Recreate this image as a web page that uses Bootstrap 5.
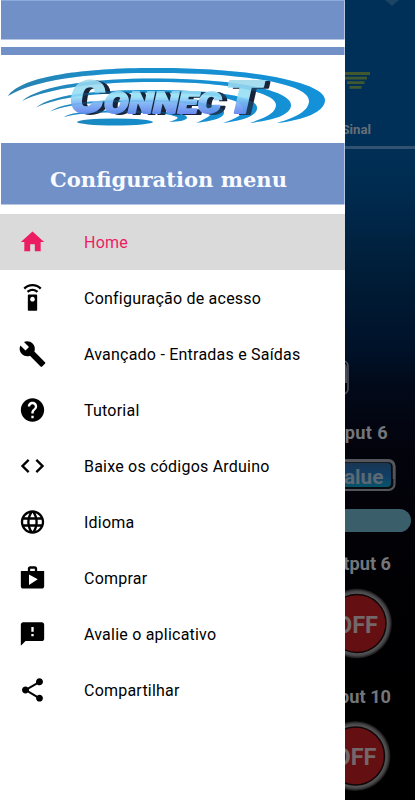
<!DOCTYPE html>
<html lang="pt">
<head>
<meta charset="utf-8">
<meta name="viewport" content="width=device-width, initial-scale=1">
<title>Connect</title>
<link href="https://cdn.jsdelivr.net/npm/bootstrap@5.3.0/dist/css/bootstrap.min.css" rel="stylesheet">
<style>
body{font-family:Roboto,"Liberation Sans",sans-serif;background:#000}
.screen{width:415px;height:800px}
.drawer{width:345px;background:#fff}
.banner{height:214px}
.banner svg{display:block}
.logo-text{filter:drop-shadow(5px 1.200px 0 #17243a)}
.menu-row,.menu-row.list-group-item{height:56px;padding:0 0 0 18px;gap:37px;border:0;border-radius:0;font-size:16px;font-weight:450;letter-spacing:.22px;color:#000;background:#fff;line-height:24px}
.menu-row.list-group-item.current{background:#dadada;color:#ec1c63}
.menu-row svg{width:29px;height:28px;fill:currentColor;flex:none}
.menu-row span{padding-top:2px}
.panel{width:70px;background:linear-gradient(#003057 0,#003058 130px,#002b50 190px,#001c36 280px,#00122a 345px,#020918 390px,#03030c 450px,#020106 540px,#000002 620px,#000 100%);color:#73767b;font-weight:700;white-space:nowrap}
.panel svg{display:block;flex:none}
.signal-name{height:28px;font-size:13.200px;line-height:23px;padding-right:44px;color:#666f77}
.rule{height:3px;background:#315270}
.spacer{height:211px}
.spacer-sm{height:19px}
.label{font-size:18.200px;line-height:26px;height:26px;padding-right:24px}
.label-first{padding-right:27px;letter-spacing:.35px}
.bar{height:23px;width:66px;background:#3a5f6b;border-radius:0 12px 12px 0}
</style>
</head>
<body>
<div class="screen d-flex overflow-hidden">
  <nav class="drawer flex-shrink-0 overflow-hidden">
    <div class="banner">
      <svg width="345" height="214" viewBox="0 0 345 214">
        <defs>
          <linearGradient id="ice" gradientUnits="userSpaceOnUse" x1="0" y1="79" x2="0" y2="114"><stop offset="0" stop-color="#a9dcec"/><stop offset=".5" stop-color="#9fe3f8"/><stop offset=".7" stop-color="#84b6f4"/><stop offset="1" stop-color="#6c8af0"/></linearGradient>
          <linearGradient id="sea" gradientUnits="userSpaceOnUse" x1="8" y1="0" x2="325" y2="0"><stop offset="0" stop-color="#2b7ba0"/><stop offset=".3" stop-color="#168bc6"/><stop offset="1" stop-color="#0d8fd6"/></linearGradient>
          <g id="rings">
            <path d="M8 96C22 75 90 67.500 160 68C250 68 325 82 325 100C325 112 304 120 277 123C298 117 309 110 309 101C309 84 245 73 160 73C95 72 35 79 8 96z"/>
            <path d="M22 101C42 84 100 78 160 78.500C235 79 291 90 291 105C291 115 274 120 250 123C268 117 276 112 276 105C276 92 225 82 160 82C105 81.500 50 87 22 101z"/>
            <path d="M36 107.500C54 93 105 90 150 90C215 90 257 96 257 108C257 117 240 121 223 123C239 118 244 113 243 108C240 97 205 93 150 93C108 93 65 94 36 107.500z"/>
            <path d="M50 111.500C65 101 105 100 145 100C195 100 225 104 224 113C223 119 210 121 196 123C208 118 212 115 211 112C204 103 180 102 145 102C105 102 75 102 50 111.500z"/>
            <path d="M64 117C75 110 112 110 140 111C168 112 188 113 187 118C185 121 178 121.500 169 122C176 120 179 118 177 117C168 113 155 113 140 113C108 112 83 112 64 117z"/>
          </g>
        </defs>
        <path fill="#7190c8" d="M1 0H344.500V39.500H1zM1 47H344.500V55H1zM1 143H344.500V204.500H1z"/>
        <path fill="#8daadd" d="M1 0H344.500V1H1z"/>
        <g fill="url(#sea)"><use href="#rings"/><ellipse cx="115" cy="122" rx="38" ry="3.500"/></g>
        <g class="logo-text" fill="url(#ice)" stroke="url(#ice)" stroke-width="1.800" stroke-linejoin="round" font-family="Roboto, sans-serif" font-weight="900" font-style="italic">
          <text x="70" y="112.500" font-size="44" textLength="34" lengthAdjust="spacingAndGlyphs">C</text>
          <text x="104" y="112.500" font-size="29" textLength="117" lengthAdjust="spacingAndGlyphs">ONNEC</text>
          <text x="225" y="112.500" font-size="45" textLength="36" lengthAdjust="spacingAndGlyphs">T</text>
        </g>
        <use href="#rings" fill="#2a9be0" opacity=".22"/>
        <text x="50" y="186.500" font-family="DejaVu Serif, serif" font-weight="700" font-size="20" fill="#f8faff" textLength="237" lengthAdjust="spacingAndGlyphs">Configuration menu</text>
      </svg>
    </div>
    <div class="list-group list-group-flush">
      <a class="list-group-item menu-row current d-flex align-items-center"><svg viewBox="0 0 24 24"><path d="M10 20v-6h4v6h5v-8h3L12 3 2 12h3v8z"/></svg><span>Home</span></a>
      <a class="list-group-item menu-row d-flex align-items-center"><svg viewBox="0 0 24 24"><path d="M15 9H9c-.55 0-1 .45-1 1v12c0 .55.45 1 1 1h6c.55 0 1-.45 1-1V10c0-.55-.45-1-1-1zm-3 6c-1.100 0-2-.9-2-2s.9-2 2-2 2 .9 2 2-.9 2-2 2zM7.050 6.050l1.410 1.410C9.370 6.560 10.620 6 12 6s2.630.56 3.540 1.460l1.410-1.410C15.680 4.780 13.930 4 12 4s-3.680.78-4.950 2.050zM12 0C8.960 0 6.210 1.230 4.220 3.220l1.410 1.410C7.260 3.010 9.510 2 12 2s4.740 1.010 6.360 2.640l1.410-1.410C17.790 1.230 15.040 0 12 0z"/></svg><span>Configuração de acesso</span></a>
      <a class="list-group-item menu-row d-flex align-items-center"><svg viewBox="0 0 24 24"><path d="M22.700 19l-9.100-9.100c.9-2.300.4-5-1.500-6.900-2-2-5-2.400-7.400-1.300L9 6 6 9 1.600 4.700C.4 7.100.9 10.100 2.900 12.100c1.900 1.900 4.600 2.400 6.900 1.500l9.100 9.100c.4.4 1 .4 1.400 0l2.300-2.300c.5-.4.5-1.100.1-1.400z"/></svg><span>Avançado - Entradas e Saídas</span></a>
      <a class="list-group-item menu-row d-flex align-items-center"><svg viewBox="0 0 24 24"><path d="M12 2C6.480 2 2 6.480 2 12s4.480 10 10 10 10-4.480 10-10S17.520 2 12 2zm1 17h-2v-2h2v2zm2.070-7.750l-.9.920C13.450 12.900 13 13.500 13 15h-2v-.5c0-1.100.45-2.100 1.170-2.830l1.240-1.260c.37-.36.59-.86.59-1.410 0-1.100-.9-2-2-2s-2 .9-2 2H8c0-2.210 1.790-4 4-4s4 1.790 4 4c0 .88-.36 1.680-.93 2.250z"/></svg><span>Tutorial</span></a>
      <a class="list-group-item menu-row d-flex align-items-center"><svg viewBox="0 0 24 24"><path d="M9.400 16.600L4.800 12l4.600-4.600L8 6l-6 6 6 6 1.400-1.400zm5.200 0l4.600-4.600-4.600-4.600L16 6l6 6-6 6-1.400-1.400z"/></svg><span>Baixe os códigos Arduino</span></a>
      <a class="list-group-item menu-row d-flex align-items-center"><svg viewBox="0 0 24 24"><path d="M11.990 2C6.470 2 2 6.480 2 12s4.470 10 9.990 10C17.520 22 22 17.520 22 12S17.520 2 11.990 2zm6.930 6h-2.950c-.32-1.250-.78-2.450-1.380-3.560 1.840.63 3.370 1.910 4.330 3.560zM12 4.040c.83 1.200 1.480 2.530 1.910 3.960h-3.820c.43-1.430 1.080-2.760 1.910-3.960zM4.260 14C4.100 13.360 4 12.690 4 12s.1-1.360.26-2h3.380c-.08.66-.14 1.320-.14 2s.06 1.340.14 2H4.260zm.82 2h2.950c.32 1.250.78 2.450 1.380 3.560-1.840-.63-3.370-1.900-4.330-3.560zm2.950-8H5.080c.96-1.660 2.490-2.930 4.330-3.560C8.810 5.550 8.350 6.750 8.030 8zM12 19.960c-.83-1.200-1.480-2.530-1.910-3.960h3.820c-.43 1.430-1.080 2.760-1.910 3.960zM14.340 14H9.660c-.09-.66-.16-1.320-.16-2s.07-1.350.16-2h4.680c.09.65.16 1.320.16 2s-.07 1.340-.16 2zm.25 5.560c.6-1.110 1.060-2.310 1.380-3.560h2.950c-.96 1.650-2.490 2.930-4.330 3.560zM16.360 14c.08-.66.14-1.320.14-2s-.06-1.340-.14-2h3.380c.16.64.26 1.310.26 2s-.1 1.360-.26 2h-3.380z"/></svg><span>Idioma</span></a>
      <a class="list-group-item menu-row d-flex align-items-center"><svg viewBox="0 0 24 24"><path d="M16 6V4c0-1.110-.89-2-2-2h-4c-1.110 0-2 .89-2 2v2H2v13c0 1.110.89 2 2 2h16c1.110 0 2-.89 2-2V6h-6zm-6-2h4v2h-4V4zM9 18V9l7.500 4L9 18z"/></svg><span>Comprar</span></a>
      <a class="list-group-item menu-row d-flex align-items-center"><svg viewBox="0 0 24 24"><path d="M20 2H4c-1.100 0-1.990.9-1.990 2L2 22l4-4h14c1.100 0 2-.9 2-2V4c0-1.100-.9-2-2-2zm-7 12h-2v-2h2v2zm0-4h-2V6h2v4z"/></svg><span>Avalie o aplicativo</span></a>
      <a class="list-group-item menu-row d-flex align-items-center"><svg viewBox="0 0 24 24"><path d="M18 16.080c-.76 0-1.440.3-1.960.77L8.910 12.700c.05-.23.09-.46.09-.7s-.04-.47-.09-.7l7.050-4.110c.54.5 1.250.81 2.040.81 1.660 0 3-1.340 3-3s-1.340-3-3-3-3 1.340-3 3c0 .24.040.47.090.7L8.040 9.810C7.500 9.310 6.790 9 6 9c-1.660 0-3 1.340-3 3s1.340 3 3 3c.79 0 1.500-.31 2.040-.81l7.120 4.160c-.05.21-.08.43-.08.65 0 1.610 1.310 2.920 2.920 2.920s2.920-1.310 2.920-2.920-1.310-2.920-2.920-2.920z"/></svg><span>Compartilhar</span></a>
    </div>
  </nav>
  <main class="panel flex-shrink-0 overflow-hidden d-flex flex-column">
    <svg width="70" height="118" viewBox="0 0 70 118"><path fill="#1c4565" d="M40 0H54L47 6z"/><path fill="#40582f" d="M0 72H25V75H0zM0 76.700H22V79.500H0zM2 81.300H19.500V84H2zM4.500 86H16.500V88.700H4.500z"/></svg>
    <div class="signal-name d-flex justify-content-end">Sinal</div>
    <div class="rule flex-shrink-0"></div>
    <div class="spacer flex-shrink-0"></div>
    <svg width="70" height="60" viewBox="0 360 70 60"><rect x="-30" y="361" width="33" height="33" rx="5" fill="#010309" stroke="#52565e" stroke-width="1.500"/><path d="M-20 363H-1Q2 364 2 368V383H-20z" fill="#484c54"/></svg>
    <div class="label label-first d-flex justify-content-end">Output 6</div>
    <svg width="70" height="63" viewBox="0 446 70 63">
      <defs><linearGradient id="val" x1="0" y1="0" x2="0" y2="1"><stop offset="0" stop-color="#183653"/><stop offset=".55" stop-color="#123e66"/><stop offset="1" stop-color="#07546a"/></linearGradient></defs>
      <rect x="-40" y="460" width="89.500" height="30" rx="6" fill="#080b10" stroke="#54565b" stroke-width="2.200"/>
      <rect x="-38" y="463" width="84" height="24" rx="4" fill="url(#val)"/>
      <path d="M-2 461H44Q49 462 49 467V479" fill="none" stroke="#54565b" stroke-width="2.500"/>
      <text x="38.500" y="483.500" text-anchor="end" font-size="20.800" fill="#5c6973">Value</text>
    </svg>
    <div class="bar flex-shrink-0"></div>
    <div class="spacer-sm flex-shrink-0"></div>
    <div class="label d-flex justify-content-end">Output 6</div>
    <svg width="70" height="107" viewBox="0 577 70 107">
      <defs><radialGradient id="rim"><stop offset=".82" stop-color="#5d5d5f"/><stop offset=".92" stop-color="#454548"/><stop offset="1" stop-color="#111"/></radialGradient></defs>
      <circle cx="12" cy="623.500" r="35" fill="url(#rim)"/><circle cx="12" cy="623.500" r="29" fill="#640f12" stroke="#100507" stroke-width="1.500"/>
      <text x="33" y="632.500" text-anchor="end" font-size="23.500" fill="#73676a">OFF</text>
    </svg>
    <div class="label d-flex justify-content-end">Output 10</div>
    <svg width="70" height="90" viewBox="0 710 70 90">
      <circle cx="10.500" cy="756" r="35" fill="url(#rim)"/><circle cx="10.500" cy="756" r="29" fill="#640f12" stroke="#100507" stroke-width="1.500"/>
      <text x="31.500" y="765" text-anchor="end" font-size="23.500" fill="#73676a">OFF</text>
    </svg>
  </main>
</div>
<script src="https://cdn.jsdelivr.net/npm/bootstrap@5.3.0/dist/js/bootstrap.bundle.min.js"></script>
</body>
</html>
